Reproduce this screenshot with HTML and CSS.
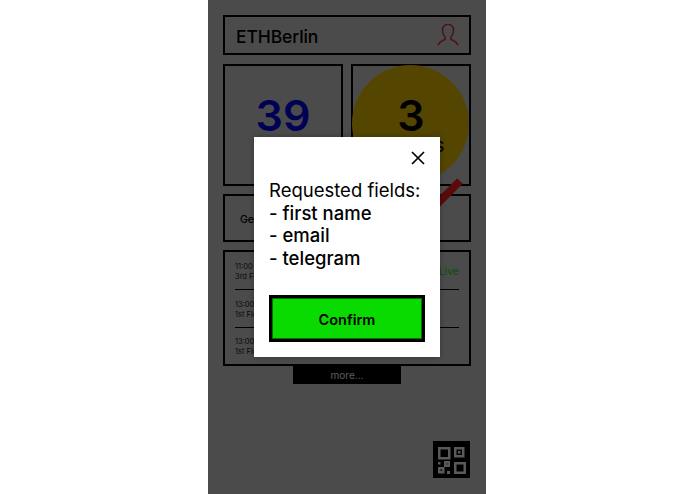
FILE: index.html
```html
<!DOCTYPE html>
<html lang="en">
<head>
<meta charset="utf-8">
<title>ETHBerlin</title>
<link rel="stylesheet" href="styles.css">
</head>
<body>
<main class="phone">
  <header class="box header">
    <span class="brand">ETHBerlin</span>
    <svg class="user" viewBox="0 0 24 24" width="24" height="24" fill="none" stroke="#e0303a" stroke-width="1.500"><path d="M2 22.500c.5-3 3.500-4.500 7-6v-2.500C7.500 12.500 6.500 10 6.500 7.500 6.500 4 8.500 1.500 12 1.500s5.500 2.500 5.500 6c0 2.500-1 5-2.500 6.500v2.500c3.500 1.500 6.500 3 7 6"/></svg>
  </header>
  <section class="stats">
    <div class="box stat"><span class="num blue">39</span></div>
    <div class="box stat"><span class="circle"></span><span class="num">3</span><span class="stat-label">tickets</span></div>
  </section>
  <section class="box wide"><span class="small-text">Get your ticket</span><span class="slash"></span></section>
  <section class="box list">
    <div class="row"><span class="when">11:00 - 12:00<br>3rd Floor</span><span class="live">Live</span></div>
    <div class="row"><span class="when">13:00 - 14:00<br>1st Floor</span></div>
    <div class="row"><span class="when">13:00 - 14:00<br>1st Floor</span></div>
  </section>
  <button class="more">more...</button>
  <button class="qr" aria-label="QR code">
    <svg viewBox="0 0 37 37" width="37" height="37"><rect width="37" height="37" fill="#000"/><g fill="none" stroke="#fff" stroke-width="2.500"><rect x="6.250" y="7.250" width="10" height="10"/><rect x="22.250" y="7.250" width="8" height="8"/><rect x="22.250" y="22.250" width="9.500" height="9.500"/><rect x="6.250" y="27.250" width="4" height="4"/><rect x="12.250" y="21.250" width="3.500" height="3.500"/></g><g fill="#fff"><rect x="25" y="10" width="2.500" height="2.500"/><rect x="5" y="21" width="2.500" height="2.500"/><rect x="14" y="30" width="3" height="3"/></g></svg>
  </button>
  <div class="overlay"></div>
  <div class="modal">
    <button class="close" aria-label="Close"><svg viewBox="0 0 14 14" width="14" height="14" fill="none" stroke="#000" stroke-width="1.700"><path d="M1 1l12 12M13 1L1 13"/></svg></button>
    <p class="fields"><span class="lead">Requested fields:</span><br>- first name<br>- email<br>- telegram</p>
    <button class="confirm">Confirm</button>
  </div>
</main>
</body>
</html>
```
FILE: styles.css
```css
* { box-sizing: border-box; }
html, body { margin: 0; height: 100%; background: #fff; }
body { display: flex; justify-content: center; font-family: "Inter", "Liberation Sans", sans-serif; color: #000; overflow: hidden; }
.phone { position: relative; width: 278px; height: 494px; margin-right: 1px; background: #d6d6d6; padding: 15px 15px 16px; display: flex; flex-direction: column; overflow: hidden; }
.box { border: 2px solid #000; }
.header { height: 40px; display: flex; align-items: center; justify-content: space-between; padding: 0 9px 0 11px; }
.brand { font-size: 17.500px; font-weight: 500; letter-spacing: -.1px; padding-top: 2px; }
.stats { display: grid; grid-template-columns: 120px 120px; gap: 8px; margin-top: 9px; }
.stat { position: relative; height: 122px; display: flex; flex-direction: column; align-items: center; padding-top: 27px; }
.num { position: relative; font-size: 43px; line-height: 44px; font-weight: 600; }
.blue { color: #0000f0; }
.circle { position: absolute; left: -1px; top: -1px; width: 117px; height: 117px; border-radius: 50%; background: #f0c800; }
.stat-label { position: relative; font-size: 20px; line-height: 16px; letter-spacing: 1px; }
.wide { position: relative; height: 48px; margin-top: 8px; display: flex; align-items: center; padding: 2px 0 0 15px; }
.small-text { font-size: 10.500px; font-weight: 500; }
.slash { position: absolute; right: 4px; top: -7px; width: 34px; height: 8px; background: #ff2020; transform: rotate(-45deg); }
.list { height: 116px; margin-top: 8px; padding: 0 10px; display: flex; flex-direction: column; }
.row { flex: 0 0 38px; padding-top: 2px; display: flex; justify-content: space-between; align-items: center; border-bottom: 1px solid #000; font-size: 7.500px; line-height: 10px; }
.row:last-child { border-bottom: 0; flex: 0 0 36px; }
.when { color: #222; }
.live { color: #20e020; font-size: 10.500px; }
.more { align-self: center; width: 108px; height: 18px; border: 0; padding: 0; background: #000; color: #fff; font: 10px "Inter", sans-serif; }
.qr { align-self: flex-end; margin-top: auto; margin-right: 1px; width: 37px; height: 37px; border: 0; padding: 0; background: none; display: block; }
.qr svg { display: block; }
.overlay { position: absolute; inset: 0; background: rgba(0, 0, 0, .65); }
.modal { position: absolute; left: 46px; top: 137px; width: 186px; height: 220px; background: #fff; padding: 14px 15px 0; display: flex; flex-direction: column; box-shadow: 0 0 6px rgba(0, 0, 0, .3); }
.close { align-self: flex-end; width: 14px; height: 14px; border: 0; padding: 0; background: none; }
.close svg { display: block; }
.fields { margin: 14px 0 0; font-size: 18.500px; line-height: 22.500px; font-weight: 500; white-space: nowrap; }
.lead { font-weight: 400; }
.confirm { margin-top: 26px; height: 47px; border: 3px solid #000; box-shadow: inset 0 0 0 1px rgba(0, 0, 0, .5); background: #09db00; padding-top: 2px; font: 600 14.500px "Inter", sans-serif; color: #000; }
```
